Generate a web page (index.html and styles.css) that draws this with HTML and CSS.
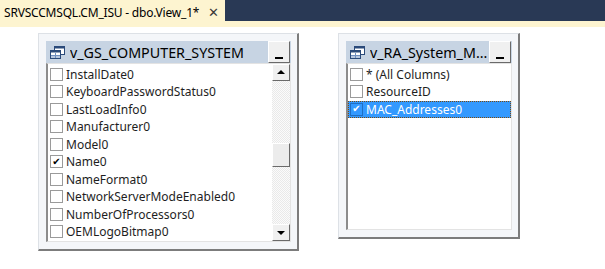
FILE: index.html
```html
<!DOCTYPE html>
<html lang="en">
<head>
    <meta charset="UTF-8">
    <title>dbo.View_1</title>
    <link rel="stylesheet" href="styles.css">
</head>
<body>

<div class="tab-well">
    <div class="tab">
        <span class="tab-title">SRVSCCMSQL.CM_ISU - dbo.View_1*</span>
        <span class="tab-close">✕</span>
    </div>
</div>

<div class="diagram">

    <!-- first table -->
    <div class="table-box tall">
        <div class="table-head">
            <svg class="table-icon" width="15" height="13" viewBox="0 0 15 13">
                <rect x="4.5" y="0.5" width="10" height="8" fill="#fff" stroke="#2a4a7a"/>
                <rect x="4.5" y="0.5" width="10" height="2" fill="#2a4a7a"/>
                <rect x="0.5" y="4.5" width="10" height="8" fill="#fff" stroke="#2a4a7a"/>
                <rect x="0.5" y="4.5" width="10" height="2" fill="#2a4a7a"/>
                <path d="M1 9.5h9M1 11h9M5.5 7v5" stroke="#6f8fbf" stroke-width="1"/>
            </svg>
            <span class="table-name">v_GS_COMPUTER_SYSTEM</span>
            <span class="min-btn"></span>
        </div>
        <div class="table-list">
            <div class="rows">
                <div class="row"><span class="box"></span>InstallDate0</div>
                <div class="row"><span class="box"></span>KeyboardPasswordStatus0</div>
                <div class="row"><span class="box"></span>LastLoadInfo0</div>
                <div class="row"><span class="box"></span>Manufacturer0</div>
                <div class="row"><span class="box"></span>Model0</div>
                <div class="row"><span class="box checked">✔</span>Name0</div>
                <div class="row"><span class="box"></span>NameFormat0</div>
                <div class="row"><span class="box"></span>NetworkServerModeEnabled0</div>
                <div class="row"><span class="box"></span>NumberOfProcessors0</div>
                <div class="row"><span class="box"></span>OEMLogoBitmap0</div>
                <div class="row"><span class="box"></span></div>
            </div>
            <div class="scrollbar">
                <span class="sb-btn up"></span>
                <div class="sb-track">
                    <span class="sb-thumb"></span>
                </div>
                <span class="sb-btn down"></span>
            </div>
        </div>
    </div>

    <!-- second table -->
    <div class="table-box short">
        <div class="table-head">
            <svg class="table-icon" width="15" height="13" viewBox="0 0 15 13">
                <rect x="4.5" y="0.5" width="10" height="8" fill="#fff" stroke="#2a4a7a"/>
                <rect x="4.5" y="0.5" width="10" height="2" fill="#2a4a7a"/>
                <rect x="0.5" y="4.5" width="10" height="8" fill="#fff" stroke="#2a4a7a"/>
                <rect x="0.5" y="4.5" width="10" height="2" fill="#2a4a7a"/>
                <path d="M1 9.5h9M1 11h9M5.5 7v5" stroke="#6f8fbf" stroke-width="1"/>
            </svg>
            <span class="table-name">v_RA_System_M...</span>
            <span class="min-btn"></span>
        </div>
        <div class="table-list">
            <div class="rows">
                <div class="row"><span class="box"></span>* (All Columns)</div>
                <div class="row"><span class="box"></span>ResourceID</div>
                <div class="row selected"><span class="box checked">✔</span>MAC_Addresses0</div>
            </div>
        </div>
    </div>

</div>

</body>
</html>
```

FILE: styles.css
```css
body {
    margin: 0;
    background-color: #fff;
    font-family: "Noto Sans", "Open Sans", sans-serif;
    color: #1e1e1e;
    width: 605px;
    height: 269px;
    overflow: hidden;
}

.tab-well {
    height: 21px;
    background-color: #293955;
    border-bottom: 6px solid #fdf4d0;
}

.tab {
    display: flex;
    align-items: center;
    width: 225px;
    height: 21px;
    padding-top: 3px;
    box-sizing: border-box;
    background-color: #fdf4d0;
}

.tab-title {
    flex: none;
    margin-left: 4px;
    font-size: 12px;
    letter-spacing: -0.2px;
    color: #000;
    white-space: nowrap;
}

.tab-close {
    flex: none;
    margin-left: 9px;
    font-size: 13px;
    color: #3a3a3a;
}

.diagram {
    display: flex;
    align-items: flex-start;
    gap: 39px;
    padding: 6px 0 0 38px;
}

.table-box {
    display: flex;
    flex-direction: column;
    box-sizing: border-box;
    background-color: #f4f6f9;
    border: 1px solid #dde1e6;
    border-right: 2px solid #7c7c7c;
    border-bottom: 2px solid #7c7c7c;
    padding: 7px 6px 7px 7px;
}

.table-box.tall {
    width: 261px;
    height: 218px;
}

.table-box.short {
    width: 182px;
    height: 206px;
}

.table-head {
    display: flex;
    align-items: center;
    height: 22px;
    background-color: #c7d4e3;
    padding-left: 4px;
}

.table-icon {
    flex: none;
}

.table-name {
    flex: 1;
    margin-left: 5px;
    font-size: 14.3px;
    color: #000;
    white-space: nowrap;
    overflow: hidden;
}

.min-btn {
    position: relative;
    flex: none;
    width: 20px;
    height: 20px;
    margin-right: 1px;
    background-color: #f0f0f0;
    border: 1px solid;
    border-color: #fff #6a6a6a #6a6a6a #fff;
}

.min-btn::after {
    content: "";
    position: absolute;
    left: 6px;
    bottom: 3px;
    width: 8px;
    height: 2px;
    background-color: #000;
}

.table-list {
    flex: 1;
    display: flex;
    min-height: 0;
    background-color: #fff;
    border: 1px solid #e3e3e3;
    border-left: 2px solid #8c8c8c;
    overflow: hidden;
}

.rows {
    flex: 1;
    padding-top: 1.5px;
    overflow: hidden;
}

.row {
    display: flex;
    align-items: center;
    height: 17.5px;
    padding-left: 2px;
    font-size: 12px;
    white-space: nowrap;
    box-sizing: border-box;
}

.row.selected {
    background-color: #3399ff;
    color: #fff;
    outline: 1px dotted #7a4a10;
    outline-offset: -1px;
}

.box {
    display: flex;
    align-items: center;
    justify-content: center;
    flex: none;
    width: 13px;
    height: 13px;
    margin-right: 3px;
    box-sizing: border-box;
    border: 1px solid #9a9a9a;
    background-color: #fff;
    font-family: "DejaVu Sans", sans-serif;
    font-size: 10px;
    line-height: 1;
    color: #000;
}

.row.selected .box {
    background-color: transparent;
    border-color: #1f6fc4;
    color: #fff;
}

.scrollbar {
    display: flex;
    flex-direction: column;
    width: 18px;
    flex: none;
}

.sb-btn {
    position: relative;
    height: 17px;
    box-sizing: border-box;
    background-color: #f0f0f0;
    border: 1px solid;
    border-color: #fff #6a6a6a #6a6a6a #fff;
}

.sb-btn::after {
    content: "";
    position: absolute;
    left: 4px;
    width: 0;
    height: 0;
    border-left: 4px solid transparent;
    border-right: 4px solid transparent;
}

.sb-btn.up::after {
    top: 5px;
    border-bottom: 4px solid #000;
}

.sb-btn.down::after {
    top: 6px;
    border-top: 4px solid #000;
}

.sb-track {
    flex: 1;
    padding-top: 62px;
    background-color: #f6f6f6;
    background-image: repeating-conic-gradient(#e9e9e9 0 25%, #fbfbfb 0 50%);
    background-size: 2px 2px;
}

.sb-thumb {
    display: block;
    height: 24px;
    box-sizing: border-box;
    background-color: #ececec;
    border: 1px solid;
    border-color: #fff #6a6a6a #6a6a6a #fff;
}
```
